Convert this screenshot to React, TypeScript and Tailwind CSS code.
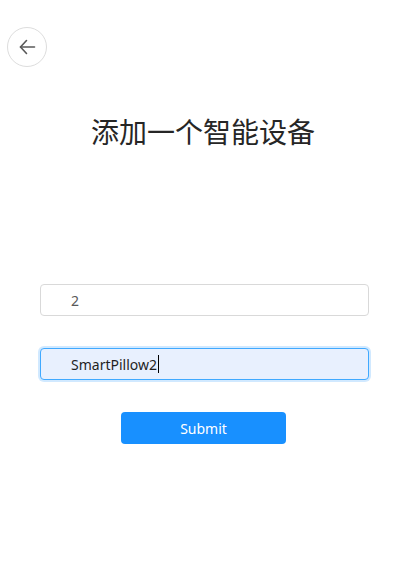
import React from "react";

export default function App() {
  return (
    <div className="w-[406px] h-[574px] bg-white relative" style={{ fontFamily: '"Noto Sans", "Noto Sans CJK SC", sans-serif' }}>
      <div className="pt-[27px] pl-[7px]">
        <button className="w-[40px] h-[40px] rounded-full border border-[#dddddd] bg-white flex items-center justify-center">
          <svg width="20" height="20" viewBox="0 0 20 20" fill="none" stroke="#595959" strokeWidth="1.6" strokeLinecap="round" strokeLinejoin="round">
            <path d="M17.5 10H3.5" />
            <path d="M9.5 3.5L3.5 10L9.5 16.5" />
          </svg>
        </button>
      </div>
      <h1 className="text-center mt-[45px] text-[28px] leading-[38px] text-[#262626] font-normal" style={{ fontFamily: '"Noto Sans CJK SC", sans-serif' }}>
        添加一个智能设备
      </h1>
      <div className="mt-[134px] px-[40px] flex flex-col">
        <div className="h-[32px] w-[329px] border border-[#d9d9d9] rounded-[4px] flex items-center pl-[30px] text-[14px] text-[#595959]">
          2
        </div>
        <div className="mt-[32px] h-[32px] w-[329px] border border-[#40a9ff] bg-[#e8f0fe] rounded-[4px] flex items-center pl-[30px] text-[14px] text-[#1f1f1f] shadow-[0_0_0_2px_rgba(24,144,255,0.2)]">
          SmartPillow2<span className="inline-block w-[1px] h-[18px] bg-black ml-[1px]" />
        </div>
        <div className="mt-[32px] flex justify-center">
          <button className="w-[165px] h-[32px] bg-[#1890ff] text-white text-[14px] rounded-[4px] ml-[1px]">Submit</button>
        </div>
      </div>
    </div>
  );
}
